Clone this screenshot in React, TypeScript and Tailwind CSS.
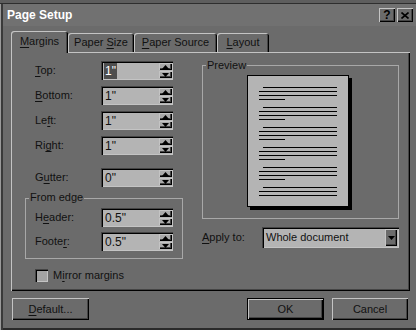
import React from "react";

const raised =
  "shadow-[inset_1px_1px_0_#c4c4c4,inset_-1px_-1px_0_#000,inset_-2px_-2px_0_#454545]";
const sunken =
  "shadow-[inset_1px_1px_0_#444,inset_2px_2px_0_#000,inset_-1px_-1px_0_#c4c4c4]";

function U({ children }: { children: React.ReactNode }) {
  return <span className="underline underline-offset-[2px] decoration-1">{children}</span>;
}

function Arrow({ up }: { up?: boolean }) {
  return (
    <svg width="7" height="4" viewBox="0 0 7 4" className="block">
      {up ? <path d="M3.5 0 L7 4 L0 4 Z" fill="#000" /> : <path d="M0 0 L7 0 L3.5 4 Z" fill="#000" />}
    </svg>
  );
}

function SpinBtn({ up }: { up?: boolean }) {
  return (
    <div className={`flex h-[7px] w-[13px] items-center justify-center bg-[#a9a9a9] ${raised}`}>
      <Arrow up={up} />
    </div>
  );
}

function Spin({ value, selected }: { value: string; selected?: boolean }) {
  return (
    <div className={`flex h-[19px] w-[72px] items-center bg-[#b4b4b4] ${sunken}`}>
      <div className="pl-[3px] text-[12px] leading-none">
        <span className={selected ? "bg-[#4e4e4e] px-px py-[1px] text-white" : "px-px"}>{value}</span>
      </div>
      <div className="ml-auto mr-[1px] flex flex-col gap-px">
        <SpinBtn up />
        <SpinBtn />
      </div>
    </div>
  );
}

function Row({ label, value, selected, className = "" }: { label: React.ReactNode; value: string; selected?: boolean; className?: string }) {
  return (
    <div className={`flex items-center ${className}`}>
      <div className="w-[66px]">{label}</div>
      <Spin value={value} selected={selected} />
    </div>
  );
}

function Tab({ children, active, w }: { children: React.ReactNode; active?: boolean; w: string }) {
  return (
    <div
      className={`relative flex items-center justify-center rounded-t-[3px] bg-[#6b6b6b] shadow-[inset_1px_1px_0_#c4c4c4,inset_-1px_0_0_#000,inset_-2px_0_0_#454545] ${w} ${
        active ? "z-10 -mb-px h-[22px] pb-[1px]" : "h-[19px]"
      }`}
    >
      {children}
    </div>
  );
}

function Btn({ children, w, def }: { children: React.ReactNode; w: string; def?: boolean }) {
  return (
    <div
      className={`flex h-[22px] items-center justify-center bg-[#6b6b6b] ${w} ${
        def
          ? "shadow-[inset_0_0_0_1px_#000,inset_2px_2px_0_#c4c4c4,inset_-2px_-2px_0_#000,inset_-3px_-3px_0_#454545]"
          : raised
      }`}
    >
      {children}
    </div>
  );
}

function PageDrawing() {
  const groups = [87, 107, 127, 147, 167, 187];
  const lines: React.ReactNode[] = [];
  groups.forEach((g, gi) => {
    const y0 = g - 75;
    lines.push(<rect key={`a${gi}`} x={16} y={y0} width={74} height={1} fill="#000" />);
    lines.push(<rect key={`b${gi}`} x={12} y={y0 + 4} width={78} height={1} fill="#000" />);
    lines.push(<rect key={`c${gi}`} x={12} y={y0 + 8} width={78} height={1} fill="#000" />);
    if (gi < 5) lines.push(<rect key={`d${gi}`} x={12} y={y0 + 12} width={26} height={1} fill="#000" />);
  });
  return (
    <svg width="106" height="136" viewBox="0 0 106 136" className="block">
      <rect x="3" y="3" width="102" height="132" fill="#000" />
      <rect x="0.5" y="0.5" width="101" height="131" fill="#b4b4b4" stroke="#000" />
      {lines}
    </svg>
  );
}

export default function App() {
  return (
    <div
      className="relative h-[330px] w-[416px] overflow-hidden bg-[#6b6b6b] text-[11px] leading-none text-[#111] shadow-[inset_1px_0_0_#9a9a9a,inset_3px_0_0_#3a3a3a,inset_0_-2px_0_#2a2a2a]"
      style={{ fontFamily: '"Liberation Sans", Arial, sans-serif' }}
    >
      <div className="h-[4px] bg-[#5e5e5e] shadow-[inset_0_-1px_0_#2e2e2e]" />
      <div className="ml-[3px] flex h-[22px] items-center bg-[#717171] pl-[4px] pr-[3px]">
        <span className="text-[12px] font-bold text-white">Page Setup</span>
        <div className="ml-auto flex gap-[2px]">
          <div className={`flex h-[14px] w-[16px] items-center justify-center bg-[#6b6b6b] text-[12px] font-bold text-black ${raised}`}>?</div>
          <div className={`flex h-[14px] w-[16px] items-center justify-center bg-[#6b6b6b] ${raised}`}>
            <svg width="8" height="7" viewBox="0 0 8 7">
              <path d="M0.5 0.5 L7.5 6.5 M7.5 0.5 L0.5 6.5" stroke="#000" strokeWidth="1.6" />
            </svg>
          </div>
        </div>
      </div>

      <div className="mt-[5px] flex h-[21px] items-end pl-[11px]">
        <Tab active w="w-[57px]">
          <span>
            <U>M</U>argins
          </span>
        </Tab>
        <Tab w="w-[66px]">
          <span>
            Paper <U>S</U>ize
          </span>
        </Tab>
        <Tab w="w-[83px]">
          <span>
            <U>P</U>aper Source
          </span>
        </Tab>
        <Tab w="w-[52px]">
          <span>
            <U>L</U>ayout
          </span>
        </Tab>
      </div>

      <div className="ml-[11px] flex h-[239px] w-[399px] shadow-[inset_1px_1px_0_#c4c4c4,inset_-1px_-1px_0_#000,inset_-2px_-2px_0_#454545]">
        <div className="flex w-[180px] flex-col">
          <div className="ml-[24px] mt-[9px] flex flex-col gap-[6px]">
            <Row label={<span><U>T</U>op:</span>} value={'1"'} selected />
            <Row label={<span><U>B</U>ottom:</span>} value={'1"'} />
            <Row label={<span>Le<U>f</U>t:</span>} value={'1"'} />
            <Row label={<span>Ri<U>g</U>ht:</span>} value={'1"'} />
          </div>
          <Row className="ml-[24px] mt-[13px]" label={<span>G<U>u</U>tter:</span>} value={'0"'} />
          <div className="relative ml-[14px] mt-[11px] h-[61px] w-[158px] border border-[#a8a8a8]">
            <span className="absolute -top-[7px] left-[3px] bg-[#6b6b6b] px-px">From edge</span>
            <div className="ml-[9px] mt-[9px] flex flex-col gap-[5px]">
              <Row label={<span>H<U>e</U>ader:</span>} value={'0.5"'} />
              <Row label={<span>Foote<U>r</U>:</span>} value={'0.5"'} />
            </div>
          </div>
          <div className="ml-[24px] mt-[10px] flex items-center gap-[5px]">
            <div className={`h-[13px] w-[13px] bg-[#a4a4a4] ${sunken}`} />
            <span>
              M<U>i</U>rror margins
            </span>
          </div>
        </div>

        <div className="flex flex-col">
          <div className="relative ml-[11px] mt-[13px] flex h-[154px] w-[197px] justify-center border border-[#a8a8a8]">
            <span className="absolute -top-[6px] left-[3px] bg-[#6b6b6b] px-px">Preview</span>
            <div className="ml-[-1px] mt-[9px]">
              <PageDrawing />
            </div>
          </div>
          <div className="ml-[11px] mt-[8px] flex items-center">
            <span className="w-[60px]">
              <U>A</U>pply to:
            </span>
            <div className={`flex h-[21px] w-[137px] items-center bg-[#b4b4b4] ${sunken}`}>
              <span className="pl-[4px] text-[11px]">Whole document</span>
              <div className={`ml-auto mr-[2px] flex h-[17px] w-[12px] items-center justify-center bg-[#6b6b6b] ${raised}`}>
                <Arrow />
              </div>
            </div>
          </div>
        </div>
      </div>

      <div className="mt-[7px] flex pl-[12px] pr-[8px]">
        <Btn w="w-[77px]">
          <span>
            <U>D</U>efault...
          </span>
        </Btn>
        <div className="ml-auto flex gap-[8px]">
          <Btn w="w-[77px]" def>
            OK
          </Btn>
          <Btn w="w-[76px]">Cancel</Btn>
        </div>
      </div>
    </div>
  );
}
